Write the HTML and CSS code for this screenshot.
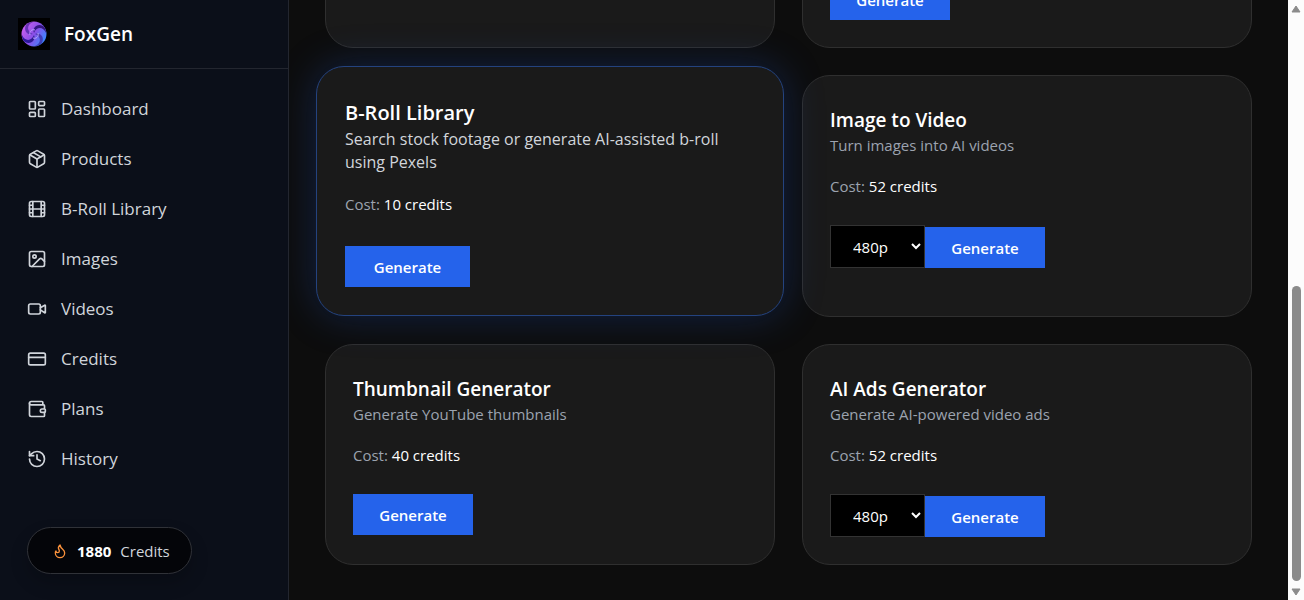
FILE: index.html
```
<!DOCTYPE html>
<html lang="en">
<head>
  <meta charset="utf-8">
  <title>FoxGen</title>
  <link rel="stylesheet" href="styles.css">
</head>
<body>
  <aside class="sidebar">
    <div class="brand">
      <svg class="logo" viewBox="0 0 32 32" aria-hidden="true">
        <defs>
          <linearGradient id="swirl" x1="0" y1="0.2" x2="1" y2="0.8">
            <stop offset="0" stop-color="#d060f0"/>
            <stop offset="0.5" stop-color="#8a50e8"/>
            <stop offset="1" stop-color="#2f8fff"/>
          </linearGradient>
          <linearGradient id="shade" gradientUnits="userSpaceOnUse" x1="4" y1="24" x2="28" y2="8">
            <stop offset="0" stop-color="#2a1aa0"/>
            <stop offset="1" stop-color="#3a1478"/>
          </linearGradient>
          <clipPath id="disc"><circle cx="16" cy="16" r="12.5"/></clipPath>
        </defs>
        <rect width="32" height="32" fill="#000"/>
        <circle cx="16" cy="16" r="12.5" fill="url(#swirl)"/>
        <g clip-path="url(#disc)" fill="url(#shade)">
          <path d="M16 15C14 10 19 5 25 8C28 10 28 13 28 15C25 8 18 9 16 15z"/>
          <path d="M17 16C22 14 27 19 24 25C22 28 19 28 17 28C24 25 23 18 17 16z" opacity="0.600"/>
          <path d="M16 17C18 22 13 27 7 24C4 22 4 19 4 17C7 24 14 23 16 17z"/>
          <path d="M15 16C10 18 5 13 8 7C10 4 13 4 15 4C8 7 9 14 15 16z" opacity="0.600"/>
        </g>
        <path d="M12 17c-1-4 2-6 5-5M20 15c1 4-2 6-5 5" fill="none" stroke="#b9a4ff" stroke-width="1"/>
      </svg>
      <span class="brand-name">FoxGen</span>
    </div>

    <nav class="menu">
      <a class="menu-item" href="#dashboard">
        <svg class="icon" viewBox="0 0 24 24"><rect width="7" height="9" x="3" y="3" rx="1"/><rect width="7" height="5" x="14" y="3" rx="1"/><rect width="7" height="9" x="14" y="12" rx="1"/><rect width="7" height="5" x="3" y="16" rx="1"/></svg>
        <span>Dashboard</span>
      </a>
      <a class="menu-item" href="#products">
        <svg class="icon" viewBox="0 0 24 24"><path d="M11 21.730a2 2 0 0 0 2 0l7-4A2 2 0 0 0 21 16V8a2 2 0 0 0-1-1.730l-7-4a2 2 0 0 0-2 0l-7 4A2 2 0 0 0 3 8v8a2 2 0 0 0 1 1.730z"/><path d="M12 22V12"/><path d="M3.300 7 12 12l8.700-5"/><path d="m7.500 4.270 9 5.150"/></svg>
        <span>Products</span>
      </a>
      <a class="menu-item" href="#broll">
        <svg class="icon" viewBox="0 0 24 24"><rect width="18" height="18" x="3" y="3" rx="2"/><path d="M7 3v18M3 7.500h4M3 12h18M3 16.500h4M17 3v18M17 7.500h4M17 16.500h4"/></svg>
        <span>B-Roll Library</span>
      </a>
      <a class="menu-item" href="#images">
        <svg class="icon" viewBox="0 0 24 24"><rect width="18" height="18" x="3" y="3" rx="2"/><circle cx="9" cy="9" r="2"/><path d="m21 15-3.086-3.086a2 2 0 0 0-2.828 0L6 21"/></svg>
        <span>Images</span>
      </a>
      <a class="menu-item" href="#videos">
        <svg class="icon" viewBox="0 0 24 24"><path d="m16 13 5.223 3.482a.5.5 0 0 0 .777-.416V7.870a.5.5 0 0 0-.752-.432L16 10.500"/><rect x="2" y="6" width="14" height="12" rx="2"/></svg>
        <span>Videos</span>
      </a>
      <a class="menu-item" href="#credits">
        <svg class="icon" viewBox="0 0 24 24"><rect width="20" height="14" x="2" y="5" rx="2"/><path d="M2 10h20"/></svg>
        <span>Credits</span>
      </a>
      <a class="menu-item" href="#plans">
        <svg class="icon" viewBox="0 0 24 24"><path d="M19 7V4a1 1 0 0 0-1-1H5a2 2 0 0 0 0 4h15a1 1 0 0 1 1 1v4h-3a2 2 0 0 0 0 4h3a1 1 0 0 0 1-1v-2a1 1 0 0 0-1-1"/><path d="M3 5v14a2 2 0 0 0 2 2h15a1 1 0 0 0 1-1v-4"/></svg>
        <span>Plans</span>
      </a>
      <a class="menu-item" href="#history">
        <svg class="icon" viewBox="0 0 24 24"><path d="M3 12a9 9 0 1 0 9-9 9.750 9.750 0 0 0-6.740 2.740L3 8"/><path d="M3 3v5h5"/><path d="M12 7v5l4 2"/></svg>
        <span>History</span>
      </a>
    </nav>

    <div class="balance">
      <svg class="icon flame" viewBox="0 0 24 24"><path d="M8.500 14.500A2.500 2.500 0 0 0 11 12c0-1.380-.5-2-1-3-1.072-2.143-.224-4.054 2-6 .5 2.500 2 4.900 4 6.500 2 1.600 3 3.500 3 5.500a7 7 0 1 1-14 0c0-1.153.433-2.294 1-3a2.500 2.500 0 0 0 2.500 2.500z"/></svg>
      <strong>1880</strong>
      <span>Credits</span>
    </div>
  </aside>

  <main class="content">
    <div class="cards">
      <section class="card"></section>
      <section class="card">
        <div class="controls">
          <button class="generate" type="button">Generate</button>
        </div>
      </section>

      <section class="card active">
        <h2>B-Roll Library</h2>
        <p class="desc">Search stock footage or generate AI-assisted b-roll using Pexels</p>
        <p class="cost">Cost: <span>10 credits</span></p>
        <div class="controls">
          <button class="generate" type="button">Generate</button>
        </div>
      </section>
      <section class="card">
        <h2>Image to Video</h2>
        <p class="desc">Turn images into AI videos</p>
        <p class="cost">Cost: <span>52 credits</span></p>
        <div class="controls">
          <select class="quality" aria-label="Video quality">
            <option>480p</option>
          </select>
          <button class="generate" type="button">Generate</button>
        </div>
      </section>

      <section class="card">
        <h2>Thumbnail Generator</h2>
        <p class="desc">Generate YouTube thumbnails</p>
        <p class="cost">Cost: <span>40 credits</span></p>
        <div class="controls">
          <button class="generate" type="button">Generate</button>
        </div>
      </section>
      <section class="card">
        <h2>AI Ads Generator</h2>
        <p class="desc">Generate AI-powered video ads</p>
        <p class="cost">Cost: <span>52 credits</span></p>
        <div class="controls">
          <select class="quality" aria-label="Ad quality">
            <option>480p</option>
          </select>
          <button class="generate" type="button">Generate</button>
        </div>
      </section>
    </div>
  </main>

  <div class="scrollbar" aria-hidden="true">
    <svg class="arrow" viewBox="0 0 10 8"><path d="M5 1 9 7H1z"/></svg>
    <div class="track"><div class="thumb"></div></div>
    <svg class="arrow" viewBox="0 0 10 8"><path d="M5 7 1 1h8z"/></svg>
  </div>
</body>
</html>
```
FILE: styles.css
```
* {
  box-sizing: border-box;
}

body {
  margin: 0;
  display: flex;
  height: 100vh;
  overflow: hidden;
  background: #0d0d0d;
  color: #fff;
  font-family: "Open Sans", "Noto Sans", sans-serif;
  font-size: 15px;
  line-height: 22px;
}

/* sidebar */
.sidebar {
  flex: 0 0 289px;
  display: flex;
  flex-direction: column;
  background: #0b0f19;
  border-right: 1px solid #23262f;
}

.brand {
  display: flex;
  align-items: center;
  gap: 14px;
  padding: 18px;
  border-bottom: 1px solid #23262f;
}

.logo {
  width: 32px;
  height: 32px;
}

.brand-name {
  font-size: 19px;
  font-weight: 600;
}

.menu {
  flex: 1;
  padding: 15px 27px;
}

.menu-item {
  display: flex;
  align-items: center;
  gap: 14px;
  height: 50px;
  color: #d1d5db;
  font-size: 17px;
  text-decoration: none;
}

.icon {
  width: 20px;
  height: 20px;
  fill: none;
  stroke: currentColor;
  stroke-width: 2;
  stroke-linecap: round;
  stroke-linejoin: round;
}

.balance {
  display: flex;
  align-items: center;
  align-self: flex-start;
  gap: 9px;
  height: 47px;
  margin: 0 27px 26px;
  padding: 0 21px 0 24px;
  background: #040509;
  border: 1px solid #303238;
  border-radius: 24px;
  box-shadow: 0 9px 18px rgba(0, 0, 0, 0.2);
  color: #d1d5db;
}

.balance strong {
  color: #fff;
}

.flame {
  width: 16px;
  height: 16px;
  color: #fb923c;
}

/* page is shown from its lower end */
.content {
  flex: 1;
  display: flex;
  flex-direction: column;
  justify-content: flex-end;
  padding: 0 36px 35px;
  overflow: hidden;
}

.cards {
  display: grid;
  grid-template-columns: 1fr 1fr;
  gap: 27px;
}

.card {
  padding: 30px 27px 27px;
  background: #1a1a1a;
  border: 1px solid #2f2f2f;
  border-radius: 28px;
}

.card h2 {
  margin: 0;
  font-size: 19px;
  font-weight: 600;
  line-height: 28px;
}

.desc {
  margin: 0 0 19px;
  color: #9ca3af;
}

.cost {
  margin: 0 0 28px;
  color: #9ca3af;
}

.cost span {
  color: #fff;
}

.card.active {
  z-index: 1;
  margin: -9px -9px 1px;
  padding: 32px 28px 28px;
  border-color: #24437f;
  box-shadow: 0 0 40px rgba(37, 99, 235, 0.25);
}

.active h2 {
  margin-bottom: 1px;
  font-size: 20px;
}

.active .desc {
  color: #d1d5db;
  font-size: 16px;
  line-height: 23px;
}

.active .cost {
  margin-bottom: 31px;
}

.controls {
  display: flex;
  align-items: flex-end;
}

.quality {
  width: 95px;
  height: 43px;
  padding: 0 0 0 18px;
  background: #000;
  border: 1px solid #333;
  border-radius: 0;
  color: #fff;
  font: inherit;
}

.generate {
  width: 120px;
  height: 41px;
  padding: 0;
  background: #2563eb;
  border: 0;
  color: #fff;
  font: inherit;
  font-weight: 600;
}

.active .generate {
  width: 125px;
}

/* scrollbar */
.scrollbar {
  flex: 0 0 16px;
  display: flex;
  flex-direction: column;
  align-items: center;
  padding: 5px 0 4px;
  background: #fcfcfc;
}

.arrow {
  width: 12px;
  height: 8px;
  fill: #8b8b8b;
  stroke: #8b8b8b;
  stroke-linejoin: round;
}

.track {
  flex: 1;
  display: flex;
  align-items: flex-end;
  padding-bottom: 7px;
}

.thumb {
  width: 9px;
  height: 52%;
  background: #8b8b8b;
  border-radius: 5px;
}
```
